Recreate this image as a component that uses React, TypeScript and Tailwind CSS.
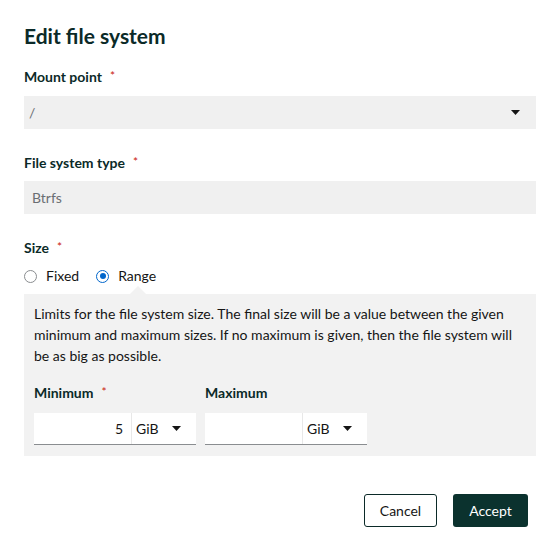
import React, { useState } from 'react';

function Label({ children, required }: { children: React.ReactNode; required?: boolean }) {
  return (
    <div className="flex items-center text-[14px] font-bold text-[#0b2a28] leading-[20px]">
      <span>{children}</span>
      {required && <span className="ml-[8px] text-[#c9190b] text-[12px] font-normal -mt-[2px]">*</span>}
    </div>
  );
}

function Caret() {
  return (
    <svg width="9" height="5" viewBox="0 0 9 5" className="shrink-0">
      <path d="M0 0 H9 L4.5 5 Z" fill="#151515" />
    </svg>
  );
}

function SizeInput({ value, required, label }: { value: string; required?: boolean; label: string }) {
  return (
    <div className="flex flex-col">
      <Label required={required}>{label}</Label>
      <div className="mt-[10px] flex h-[32px] bg-white border-b border-[#8a8d90]">
        <div className="w-[97px] flex items-center justify-end pr-[8px] text-[14px] text-[#151515]">{value}</div>
        <div className="w-[65px] border-l border-[#e8e8e8] flex items-center justify-between pl-[4px] pr-[15px] text-[14px] text-[#151515]">
          <span>GiB</span>
          <Caret />
        </div>
      </div>
    </div>
  );
}

export default function App() {
  const [mode, setMode] = useState<'fixed' | 'range'>('range');

  return (
    <div className="w-[560px] h-[551px] bg-white px-[24px] pt-[23px] font-['Lato',sans-serif] text-[#151515]">
      <h1 className="text-[21px] font-bold text-[#0b2a28] leading-[26px]">Edit file system</h1>

      <div className="mt-[18px]">
        <Label required>Mount point</Label>
        <div className="mt-[9px] h-[33px] bg-[#f0f0f0] flex items-center justify-between pl-[5px] pr-[16px] text-[14px] text-[#6a6e73]">
          <span>/</span>
          <Caret />
        </div>
      </div>

      <div className="mt-[24px]">
        <Label required>File system type</Label>
        <div className="mt-[8px] h-[33px] bg-[#f0f0f0] flex items-center pl-[8px] text-[14px] text-[#6a6e73]">Btrfs</div>
      </div>

      <div className="mt-[24px]">
        <Label required>Size</Label>
        <div className="mt-[8px] flex items-center gap-[17px] text-[14px] leading-[20px]">
          <label className="flex items-center gap-[9px] cursor-pointer" onClick={() => setMode('fixed')}>
            <span className={`w-[13px] h-[13px] rounded-full border-[1.5px] flex items-center justify-center ${mode === 'fixed' ? 'border-[#0066cc]' : 'border-[#8a8d90]'}`}>
              {mode === 'fixed' && <span className="w-[6px] h-[6px] rounded-full bg-[#0066cc]" />}
            </span>
            <span>Fixed</span>
          </label>
          <label className="flex items-center gap-[9px] cursor-pointer" onClick={() => setMode('range')}>
            <span className={`w-[13px] h-[13px] rounded-full border-[1.5px] flex items-center justify-center ${mode === 'range' ? 'border-[#0066cc]' : 'border-[#8a8d90]'}`}>
              {mode === 'range' && <span className="w-[6px] h-[6px] rounded-full bg-[#0066cc]" />}
            </span>
            <span>Range</span>
          </label>
        </div>

        <div className="relative mt-[8px] bg-[#f2f2f2] px-[10px] pt-[9px] pb-[11px]">
          <div className="absolute -top-[8px] left-[106px] w-0 h-0 border-l-[8px] border-r-[8px] border-b-[8px] border-l-transparent border-r-transparent border-b-[#f2f2f2]" />
          <p className="text-[14px] leading-[21px] text-[#151515]">
            Limits for the file system size. The final size will be a value between the given minimum and maximum sizes. If no maximum is given, then the file system will be as big as possible.
          </p>
          <div className="mt-[17px] flex gap-[9px]">
            <SizeInput label="Minimum" required value="5" />
            <SizeInput label="Maximum" value="" />
          </div>
        </div>
      </div>

      <div className="mt-[38px] flex justify-end gap-[16px] pr-[8px]">
        <button className="h-[33px] w-[73px] rounded-[3px] border border-[#0b2a28] bg-white text-[14px] text-[#151515]">Cancel</button>
        <button className="h-[33px] w-[75px] rounded-[3px] bg-[#0b322e] text-[14px] text-white">Accept</button>
      </div>
    </div>
  );
}
